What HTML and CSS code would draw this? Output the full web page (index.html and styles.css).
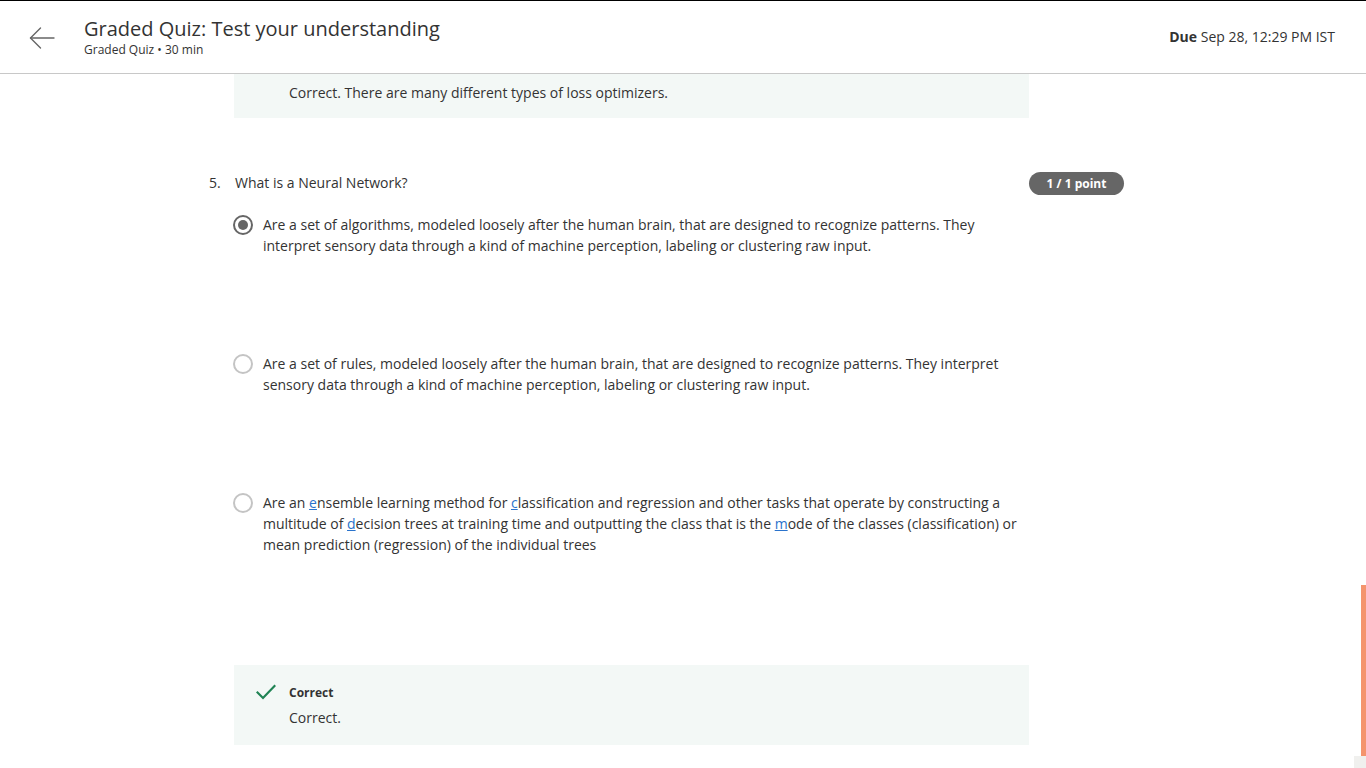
FILE: index.html
```html
<!DOCTYPE html>
<html lang="en">
<head>
<meta charset="utf-8">
<title>Graded Quiz: Test your understanding</title>
<link rel="stylesheet" href="styles.css">
</head>
<body>
<header class="topbar">
  <a class="back" aria-label="Back">
    <svg width="26" height="22" viewBox="0 0 26 22" fill="none" stroke="#666" stroke-width="1.4" stroke-linecap="round" stroke-linejoin="round">
      <path d="M25 11H1.5"/>
      <path d="M11.5 1L1.5 11l10 10"/>
    </svg>
  </a>
  <div class="titles">
    <h1 class="title">Graded Quiz: Test your understanding</h1>
    <div class="subtitle">Graded Quiz • 30 min</div>
  </div>
  <div class="due"><b>Due</b> Sep 28, 12:29 PM IST</div>
</header>

<main class="content">
  <div class="feedback partial">
    <p class="fb-text">Correct. There are many different types of loss optimizers.</p>
  </div>

  <section class="question">
    <div class="q-head">
      <span class="q-num">5.</span>
      <span class="q-text">What is a Neural Network?</span>
      <span class="badge">1 / 1 point</span>
    </div>

    <div class="options">
      <div class="option">
        <span class="radio checked"></span>
        <p class="opt-text">Are a set of algorithms, modeled loosely after the human brain, that are designed to recognize patterns. They interpret sensory data through a kind of machine perception, labeling or clustering raw input.</p>
      </div>
      <div class="option">
        <span class="radio"></span>
        <p class="opt-text">Are a set of rules, modeled loosely after the human brain, that are designed to recognize patterns. They interpret sensory data through a kind of machine perception, labeling or clustering raw input.</p>
      </div>
      <div class="option">
        <span class="radio"></span>
        <p class="opt-text">Are an <u class="lnk">e</u>nsemble learning method for <u class="lnk">c</u>lassification and regression and other tasks that operate by constructing a multitude of <u class="lnk">d</u>ecision trees at training time and outputting the class that is the <u class="lnk">m</u>ode of the classes (classification) or mean prediction (regression) of the individual trees</p>
      </div>
    </div>

    <div class="feedback result">
      <svg class="check" width="20" height="16" viewBox="0 0 20 16" fill="none" stroke="#1f8354" stroke-width="2.2" stroke-linecap="square">
        <path d="M1.5 8.5l5.5 5.5L18.5 2"/>
      </svg>
      <div class="fb-body">
        <div class="fb-title">Correct</div>
        <p class="fb-msg">Correct.</p>
      </div>
    </div>
  </section>
</main>

<div class="scroll-thumb"></div>
<div class="scroll-corner"></div>
</body>
</html>
```

FILE: styles.css
```css
* { box-sizing: border-box; }

html, body {
  margin: 0;
  padding: 0;
  background: #fff;
  font-family: "Open Sans", "Liberation Sans", sans-serif;
  color: #333;
  overflow: hidden;
  height: 768px;
}

.topbar {
  display: flex;
  align-items: center;
  height: 74px;
  border-top: 1px solid #000;
  border-bottom: 1px solid #c8c8c8;
  padding: 0 31px 0 29px;
}

.back {
  display: flex;
  width: 26px;
  height: 22px;
  margin-right: 29px;
  margin-top: 1px;
}

.titles {
  flex: 1;
}

.title {
  margin: 0;
  font-size: 20px;
  line-height: 26px;
  font-weight: 400;
  color: #333;
}

.subtitle {
  font-size: 12px;
  line-height: 16px;
  color: #333;
}

.due {
  font-size: 14px;
  line-height: 20px;
  color: #333;
}

.due b { font-weight: 700; }

.content {
  padding-left: 209px;
}

.feedback {
  background: #f3f8f6;
  width: 795px;
  margin-left: 25px;
}

.feedback.partial {
  height: 44px;
  padding: 8px 0 0 55px;
}

.fb-text {
  margin: 0;
  font-size: 14px;
  line-height: 21px;
}

.question {
  width: 915px;
  margin-top: 54px;
}

.q-head {
  display: flex;
  align-items: flex-start;
  height: 23px;
}

.q-num {
  width: 26px;
  font-size: 14px;
  line-height: 21px;
}

.q-text {
  flex: 1;
  font-size: 14px;
  line-height: 21px;
}

.badge {
  width: 95px;
  height: 23px;
  border-radius: 12px;
  background: #666;
  color: #fff;
  font-size: 12px;
  font-weight: 700;
  line-height: 23px;
  text-align: center;
}

.options {
  margin-top: 19px;
  margin-left: 24px;
}

.option {
  display: flex;
  align-items: flex-start;
  min-height: 139px;
}

.radio {
  flex: none;
  width: 20px;
  height: 20px;
  border: 2px solid #c4c4c4;
  border-radius: 50%;
  margin-top: 0.5px;
  margin-right: 10px;
  display: flex;
  align-items: center;
  justify-content: center;
}

.radio.checked {
  border-color: #666;
}

.radio.checked::after {
  content: "";
  width: 10px;
  height: 10px;
  border-radius: 50%;
  background: #666;
}

.opt-text {
  margin: 0;
  width: 760px;
  font-size: 14px;
  line-height: 21px;
}

.lnk {
  color: #2a73cc;
  text-decoration: underline;
}

.feedback.result {
  display: flex;
  align-items: flex-start;
  margin-top: 34px;
  height: 80px;
  padding: 20px 0 0 22px;
}

.check {
  flex: none;
  margin-top: -1px;
  margin-right: 13px;
}

.fb-title {
  font-size: 12px;
  line-height: 16px;
  font-weight: 700;
}

.fb-msg {
  margin: 6px 0 0;
  font-size: 14px;
  line-height: 21px;
}

.scroll-thumb {
  position: fixed;
  right: 0;
  top: 585px;
  width: 5px;
  height: 171px;
  background: #f4946d;
}

.scroll-corner {
  position: fixed;
  right: 0;
  bottom: 0;
  width: 12px;
  height: 12px;
  background: #f0f0ee;
}
```
